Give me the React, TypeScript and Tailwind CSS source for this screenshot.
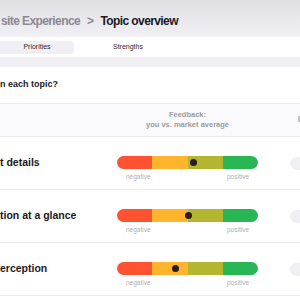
const topics = [
  { label: 't details', dot: 76 },
  { label: 'tion at a glance', dot: 71 },
  { label: 'erception', dot: 58 },
]

function FeedbackBar({ dot }: { dot: number }) {
  return (
    <div className="w-[141px] shrink-0 mt-[19px]">
      <div className="relative h-[13px]">
        <div className="flex h-full rounded-full overflow-hidden">
          <div className="flex-1 bg-[#ff5230]" />
          <div className="flex-1 bg-[#feb42c]" />
          <div className="flex-1 bg-[#b4b62f]" />
          <div className="flex-1 bg-[#29b655]" />
        </div>
        <div
          className="absolute top-[3px] w-[7px] h-[7px] rounded-full bg-[#2a1c1c]"
          style={{ left: dot - 3.5 }}
        />
      </div>
      <div className="flex justify-between px-[9px] mt-[4px] text-[6.5px] leading-[8px] text-[#aeaeb2]">
        <span>negative</span>
        <span>positive</span>
      </div>
    </div>
  )
}

export default function App() {
  return (
    <div className="w-[300px] h-[300px] overflow-hidden bg-white font-['Liberation_Sans',Arial,sans-serif]">
      {/* breadcrumb header */}
      <div className="h-[37px] bg-gradient-to-b from-[#e0dfe4] to-[#f1f0f5] flex items-center pt-[5px] pl-[1px] text-[12px] font-bold tracking-[-0.6px] whitespace-nowrap">
        <span className="text-[#8c8892]">site Experience</span>
        <span className="text-[#8c8892] mx-[7px]">&gt;</span>
        <span className="text-[#1b1a1e]">Topic overview</span>
      </div>

      {/* tabs */}
      <div className="h-[20px] bg-white flex items-center text-[7px] text-[#2a292e]">
        <div className="w-[74px] shrink-0 h-[13px] bg-[#f0eff4] rounded-r-[4px] flex items-center justify-center">
          Priorities
        </div>
        <div className="ml-[39px]">Strengths</div>
      </div>
      <div className="h-[10px] bg-[#f0eff4]" />

      {/* question */}
      <div className="h-[36px] flex items-center text-[9px] font-bold text-[#222126] whitespace-nowrap">
        n each topic?
      </div>

      {/* table head */}
      <div className="h-[34px] bg-[#fafafc] border-y border-[#ececf0] flex items-center">
        <div className="w-[117px] shrink-0" />
        <div className="w-[141px] shrink-0 text-center text-[7.5px] leading-[10px] font-bold text-[#9b9aa0]">
          <div>Feedback:</div>
          <div>you vs. market average</div>
        </div>
        <div className="ml-[40px] shrink-0 w-[4px] h-[6px] bg-[#c4c3c8] mb-[2px]" />
      </div>

      {/* topic rows */}
      {topics.map((t) => (
        <div key={t.label} className="h-[53px] border-b border-[#ececf0] flex items-start">
          <div className="w-[117px] shrink-0 h-[13px] mt-[19px] flex items-center text-[10.5px] font-bold text-[#1b1a1e] whitespace-nowrap">
            {t.label}
          </div>
          <FeedbackBar dot={t.dot} />
          <div className="ml-[32px] shrink-0 mt-[20px] w-[20px] h-[13px] rounded-l-full bg-[#f0eff4]" />
        </div>
      ))}
    </div>
  )
}
